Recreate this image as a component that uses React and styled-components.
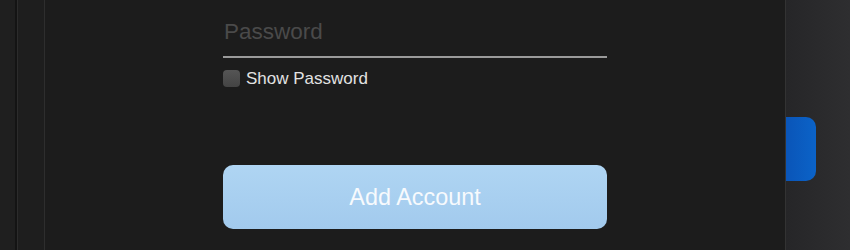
import React from 'react';
import styled, { createGlobalStyle } from 'styled-components';

const GlobalStyle = createGlobalStyle`
  html, body {
    margin: 0;
    padding: 0;
    background: #1c1c1c;
    font-family: "Liberation Sans", Arial, sans-serif;
  }
`;

const Screen = styled.div`
  width: 850px;
  height: 250px;
  display: flex;
  overflow: hidden;
  background: #1c1c1c;
`;

const EdgeStrip = styled.div`
  width: 15px;
  background: #1f1f1f;
  border-right: 2px solid #141414;
`;

const SideColumn = styled.div`
  width: 26px;
  background: #1e1e1e;
  border-left: 1px solid #2c2c2c;
  border-right: 1px solid #2e2e2e;
`;

const Panel = styled.div`
  flex: 1;
  background: #1c1c1c;
  display: flex;
  flex-direction: column;
  padding-left: 178px;
  border-right: 1px solid #333;
`;

const Form = styled.div`
  width: 384px;
  display: flex;
  flex-direction: column;
`;

const Field = styled.div`
  margin-top: 19px;
  padding: 0 0 0 1px;
  height: 39px;
  border-bottom: 2px solid #9a9a9a;
  box-sizing: border-box;
  font-size: 22.5px;
  color: #4a4a4a;
  line-height: 26px;
`;

const CheckRow = styled.label`
  display: flex;
  align-items: center;
  gap: 6px;
  margin-top: 11px;
  font-size: 17px;
  line-height: 19px;
  color: #e2e2e2;
`;

const Box = styled.span`
  width: 17px;
  height: 17px;
  border-radius: 4px;
  background: linear-gradient(#555, #444);
  box-sizing: border-box;
`;

const Button = styled.button`
  margin-top: 77px;
  height: 64px;
  border: none;
  border-radius: 10px;
  background: linear-gradient(#afd5f3, #a2caed);
  color: #f7fafd;
  font-family: "Liberation Sans", Arial, sans-serif;
  font-size: 23.4px;
  padding: 0;
`;

const RightPane = styled.div`
  width: 64px;
  background: linear-gradient(90deg, #262628, #2e2e30);
  display: flex;
  flex-direction: column;
`;

const Tab = styled.div`
  margin-top: 117px;
  width: 30px;
  height: 64px;
  border-radius: 0 10px 10px 0;
  background: linear-gradient(90deg, #0a55b8, #0b63c8);
`;

export default function App() {
  return (
    <>
      <GlobalStyle />
      <Screen>
        <EdgeStrip />
        <SideColumn />
        <Panel>
          <Form>
            <Field>Password</Field>
            <CheckRow>
              <Box />
              Show Password
            </CheckRow>
            <Button>Add Account</Button>
          </Form>
        </Panel>
        <RightPane>
          <Tab />
        </RightPane>
      </Screen>
    </>
  );
}
